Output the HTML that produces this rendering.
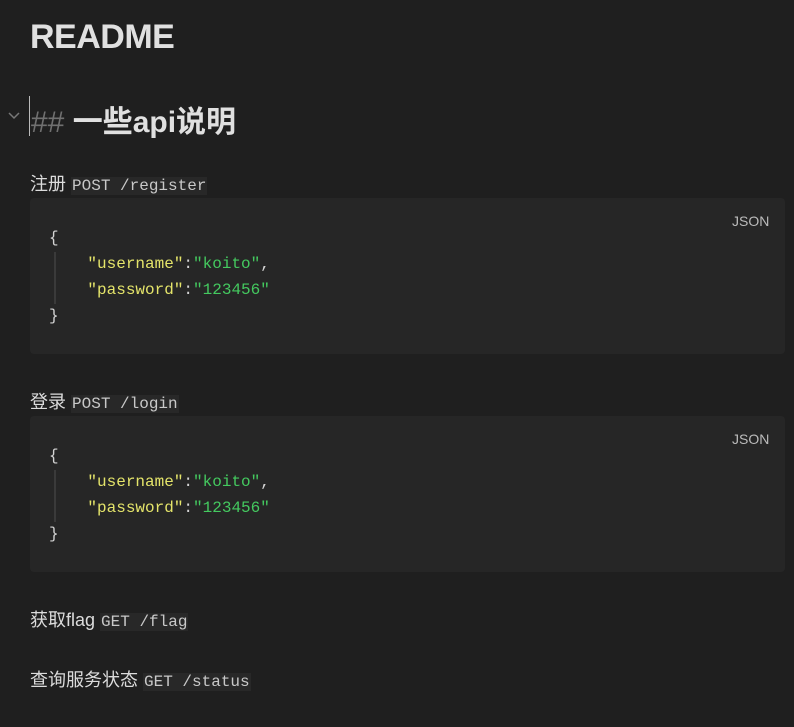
<!DOCTYPE html>
<html><head><meta charset="utf-8"><style>
body{margin:0;width:794px;height:727px;background:#1f1f1f;color:#d4d4d4;font-family:"Liberation Sans","Noto Sans CJK SC",sans-serif;position:relative;overflow:hidden}
.a{position:absolute;white-space:pre}
.mono{font-family:"Liberation Mono","Noto Sans CJK SC",monospace}
.code{position:absolute;left:30px;width:755px;background:#262626;border-radius:4px}
.k{color:#e4e46a}.v{color:#44c95f}
.ic{background:#282828;color:#c8c8c8;font-size:16px;padding:0 1px}
.p{font-size:18px;color:#dcdcdc}
</style></head><body>
<div class="a" style="left:30px;top:18px;font-size:34px;font-weight:bold;color:#e0e0e0;letter-spacing:-0.5px">README</div>
<svg class="a" style="left:8px;top:112px" width="12" height="8"><path d="M1 1l5 5 5-5" stroke="#777" stroke-width="1.5" fill="none"/></svg>
<div class="a" style="left:29px;top:96px;width:1px;height:40px;background:#bbb"></div>
<div class="a" style="left:31px;top:97px;font-size:30px;font-weight:bold;color:#e0e0e0"><span style="color:#707070;font-weight:normal">##</span> 一些api说明</div>
<div class="a p" style="left:30px;top:170px">注册 <span class="ic mono">POST /register</span></div>
<div class="code" style="top:198px;height:156px"></div>
<div class="a" style="left:732px;top:213px;font-size:14px;color:#bbb">JSON</div>
<div class="a mono" style="left:49px;top:225px;font-size:16px;line-height:26px;color:#d4d4d4">{
    <span class="k">"username"</span>:<span class="v">"koito"</span>,
    <span class="k">"password"</span>:<span class="v">"123456"</span>
}</div>
<div class="a" style="left:54px;top:252px;width:2px;height:52px;background:#3a3a3a"></div>
<div class="a p" style="left:30px;top:388px">登录 <span class="ic mono">POST /login</span></div>
<div class="code" style="top:416px;height:156px"></div>
<div class="a" style="left:732px;top:431px;font-size:14px;color:#bbb">JSON</div>
<div class="a mono" style="left:49px;top:443px;font-size:16px;line-height:26px;color:#d4d4d4">{
    <span class="k">"username"</span>:<span class="v">"koito"</span>,
    <span class="k">"password"</span>:<span class="v">"123456"</span>
}</div>
<div class="a" style="left:54px;top:470px;width:2px;height:52px;background:#3a3a3a"></div>
<div class="a p" style="left:30px;top:606px">获取flag <span class="ic mono">GET /flag</span></div>
<div class="a p" style="left:30px;top:666px">查询服务状态 <span class="ic mono">GET /status</span></div>
</body></html>
